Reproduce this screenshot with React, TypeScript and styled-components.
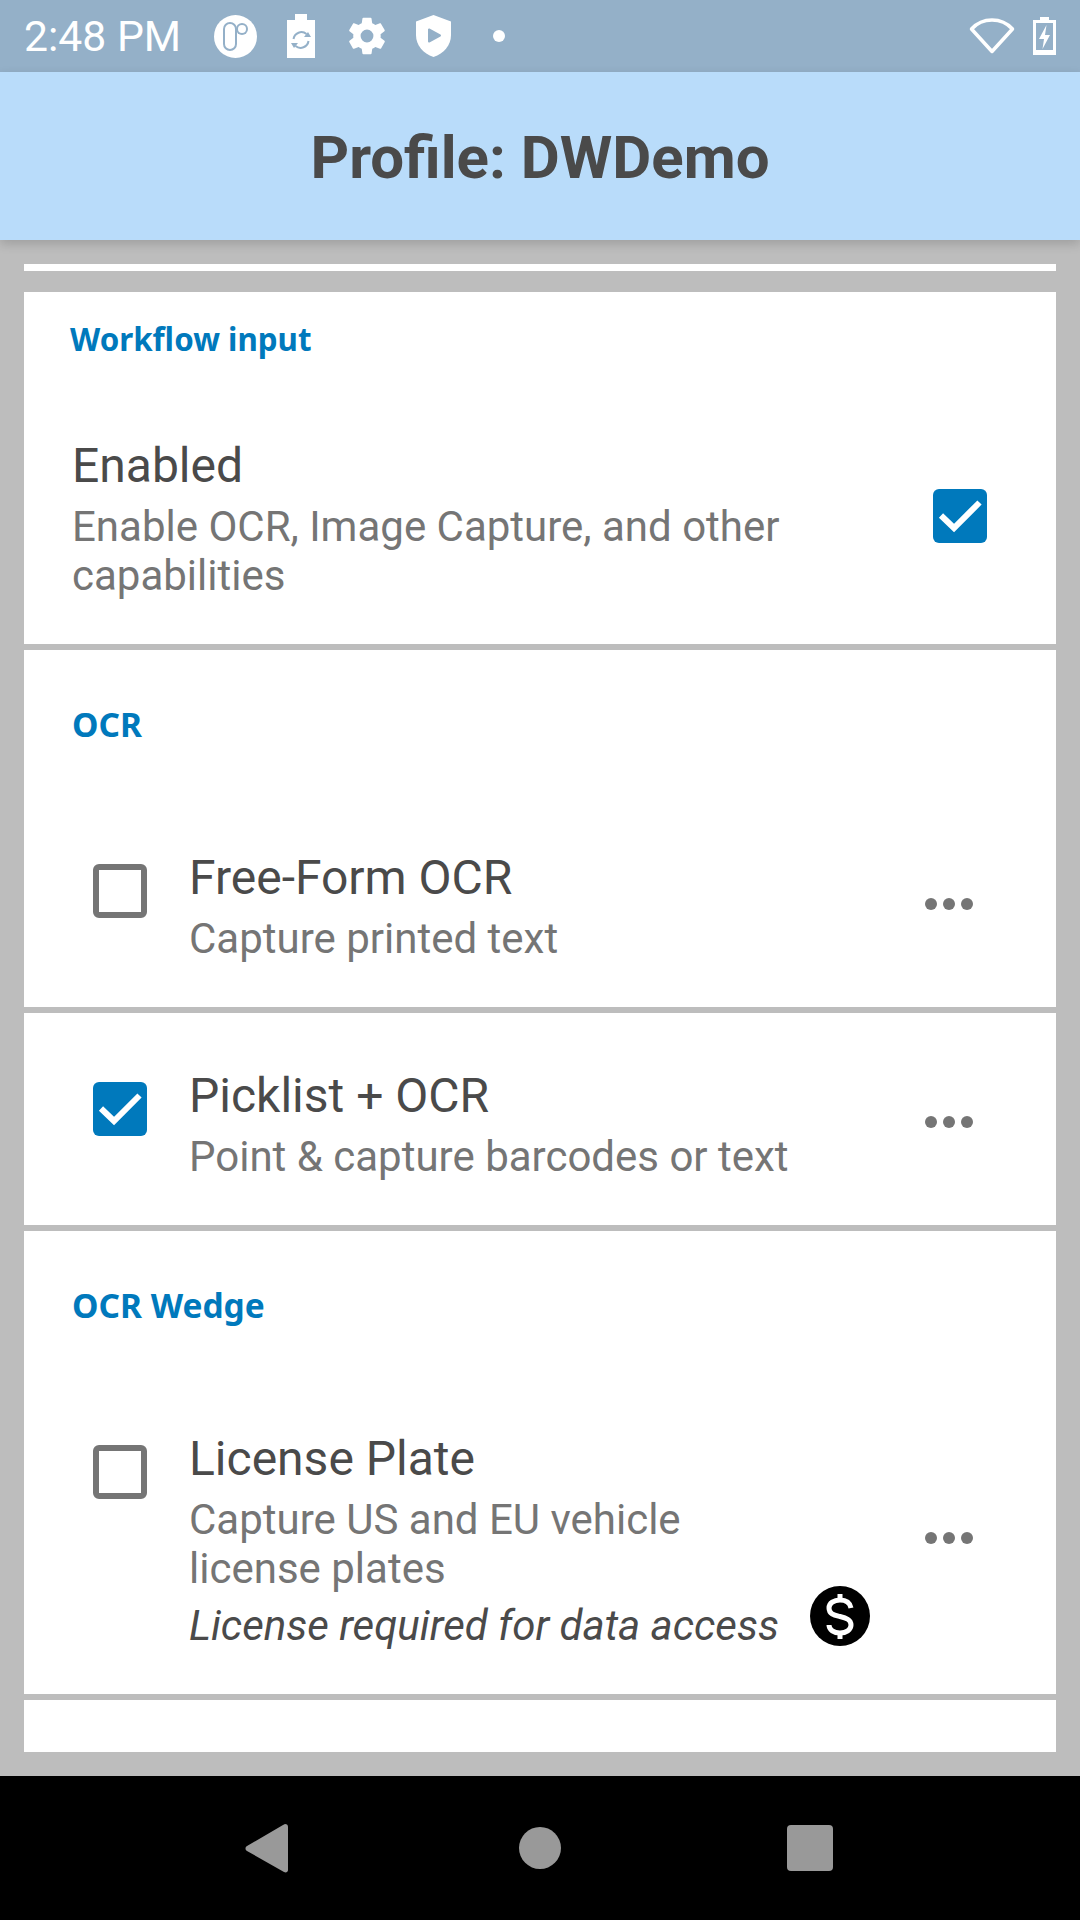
import React from 'react';
import styled, { createGlobalStyle } from 'styled-components';

const GlobalStyle = createGlobalStyle`
  html, body {
    margin: 0;
    padding: 0;
    background: #bdbdbd;
  }
`;

const Screen = styled.div`
  width: 1080px;
  height: 1920px;
  display: flex;
  flex-direction: column;
  overflow: hidden;
  font-family: Roboto, "Liberation Sans", sans-serif;
  background: #bdbdbd;
`;

const StatusBar = styled.div`
  height: 72px;
  flex: none;
  display: flex;
  align-items: center;
  padding: 0 24px;
  background: #94b0c8;
  color: #fff;
`;

const Clock = styled.span`
  font-size: 42.7px;
  width: 190px;
`;

const StatusIcons = styled.div`
  display: flex;
  align-items: center;
  gap: 30px;
  flex: 1;
`;

const AppBar = styled.header`
  height: 168px;
  flex: none;
  display: flex;
  align-items: center;
  justify-content: center;
  padding-top: 2px;
  box-sizing: border-box;
  background: #b9dcfa;
  box-shadow: 0 4px 10px rgba(0, 0, 0, 0.16);
  position: relative;
  z-index: 1;
`;

const Title = styled.h1`
  margin: 0;
  font-size: 60px;
  font-weight: 700;
  color: #4a4a4a;
`;

const Content = styled.main`
  flex: 1;
  display: flex;
  flex-direction: column;
  gap: 6px;
  padding: 24px;
  overflow: hidden;
`;

const Strip = styled.div`
  height: 7px;
  flex: none;
  background: #fff;
  margin-bottom: 15px;
`;

const Card = styled.section<{ $height: number }>`
  height: ${p => p.$height}px;
  flex: none;
  background: #fff;
  position: relative;
  overflow: hidden;
`;

const SectionLabel = styled.div<{ $left: number; $top: number; $size?: number }>`
  padding: ${p => p.$top}px 0 0 ${p => p.$left}px;
  font-family: "Noto Sans", "Open Sans", sans-serif;
  font-size: ${p => p.$size ?? 33.5}px;
  line-height: 46px;
  font-weight: 700;
  color: #0079bc;
`;

const Row = styled.div<{ $top: number }>`
  display: flex;
  align-items: flex-start;
  padding-top: ${p => p.$top}px;
`;

const BoxSlot = styled.div<{ $top: number }>`
  width: 165px;
  flex: none;
  padding: ${p => p.$top}px 0 0 69px;
  box-sizing: border-box;
`;

const Body = styled.div<{ $left?: number }>`
  flex: 1;
  padding-left: ${p => p.$left ?? 0}px;
  min-width: 0;
`;

const ItemTitle = styled.div`
  font-size: 48px;
  line-height: 58px;
  margin-bottom: 7px;
  color: #4a4a4a;
`;

const ItemText = styled.div<{ $width: number }>`
  width: ${p => p.$width}px;
  font-size: 42px;
  line-height: 49px;
  color: #757575;
`;

const LicenseLine = styled.div`
  display: flex;
  align-items: flex-start;
  margin-top: 8px;
  height: 49px;
  font-size: 42px;
  line-height: 49px;
  font-style: italic;
  white-space: nowrap;
  color: #4a4a4a;
`;

const DollarSlot = styled.div`
  margin: -15px 0 0 31px;
  height: 60px;
`;

const MoreSlot = styled.div<{ $top: number }>`
  width: 131px;
  flex: none;
  padding-top: ${p => p.$top}px;
`;

const EnabledBox = styled.div`
  width: 123px;
  flex: none;
  padding-top: 52px;
`;

const Box = styled.div<{ $checked?: boolean }>`
  width: 54px;
  height: 54px;
  box-sizing: border-box;
  border-radius: 6px;
  display: flex;
  align-items: center;
  justify-content: center;
  background: ${p => (p.$checked ? '#0079bc' : '#fff')};
  border: ${p => (p.$checked ? 'none' : '6px solid #757575')};
`;

const NavBar = styled.nav`
  height: 144px;
  flex: none;
  background: #000;
  display: flex;
  align-items: center;
  justify-content: center;
  gap: 226px;
`;

const Glyph = styled.svg<{ $left?: number; $right?: number }>`
  display: block;
  flex: none;
  margin-left: ${p => p.$left ?? 0}px;
  margin-right: ${p => p.$right ?? 0}px;
`;

const NavIcon = styled(Glyph)`
  fill: #999;
`;

const SmallDot = styled.span`
  width: 12px;
  height: 12px;
  border-radius: 50%;
  background: #fff;
  margin-left: 12px;
`;

const Check = () => (
  <svg width="54" height="54" viewBox="0 0 54 54">
    <path d="M8 26.5 L21 39 L46.5 13.5" fill="none" stroke="#fff" strokeWidth="6" />
  </svg>
);

const Checkbox = ({ checked }: { checked?: boolean }) => (
  <Box $checked={checked}>{checked && <Check />}</Box>
);

const Dots = () => (
  <Glyph width="48" height="12" viewBox="0 0 48 12">
    <circle cx="6" cy="6" r="6" fill="#757575" />
    <circle cx="24" cy="6" r="6" fill="#757575" />
    <circle cx="42" cy="6" r="6" fill="#757575" />
  </Glyph>
);

const Dollar = () => (
  <Glyph width="60" height="60" viewBox="0 0 60 60">
    <circle cx="30" cy="30" r="30" fill="#000" />
    <path
      d="M41 22c-1-5-5-8-11-8s-11 3-11 8c0 6 5 7 11 8.5s11 3 11 8.500c0 5-5 8-11 8s-11-3-11-8"
      fill="none"
      stroke="#fff"
      strokeWidth="5"
    />
    <path d="M30 8v7M30 46v7" stroke="#fff" strokeWidth="5" />
  </Glyph>
);

const LogoIcon = () => (
  <Glyph width="43" height="43" viewBox="0 0 43 43">
    <circle cx="21.500" cy="21.500" r="21.500" fill="#fff" />
    <rect x="10" y="8" width="12" height="27" rx="6" fill="none" stroke="#94b0c8" strokeWidth="2" />
    <circle cx="28" cy="14" r="6" fill="#94b0c8" />
    <circle cx="28" cy="14" r="4" fill="#fff" />
  </Glyph>
);

const BatterySyncIcon = () => (
  <Glyph width="28" height="44" viewBox="0 0 28 44">
    <path d="M8 0h12v6h8v38H0V6h8z" fill="#fff" />
    <path d="M6.500 25a8 8 0 0 1 13-5M21.500 27a8 8 0 0 1-13 5" fill="none" stroke="#94b0c8" strokeWidth="2" />
    <path d="M17 23h7l-3-5zM11 29H4l3 5z" fill="#94b0c8" />
  </Glyph>
);

const GearIcon = () => (
  <Glyph width="44" height="44" viewBox="0 0 24 24">
    <path
      fill="#fff"
      fillRule="evenodd"
      d="M19.400 13c.04-.32.07-.66.07-1s-.03-.68-.07-1l2.110-1.650c.19-.15.24-.42.12-.64l-2-3.460c-.12-.22-.39-.3-.61-.22l-2.490 1c-.52-.4-1.080-.73-1.690-.98l-.38-2.650A.49.49 0 0 0 14 2h-4c-.25 0-.46.18-.49.42l-.38 2.650c-.61.25-1.170.59-1.690.98l-2.490-1c-.23-.09-.49 0-.61.22l-2 3.460c-.13.22-.07.49.12.64L4.570 11c-.04.32-.07.66-.07 1s.03.68.07 1l-2.110 1.650c-.19.15-.24.42-.12.64l2 3.460c.12.22.39.3.61.22l2.490-1c.52.4 1.080.73 1.690.98l.38 2.650c.03.24.24.42.49.42h4c.25 0 .46-.18.49-.42l.38-2.650c.61-.25 1.170-.59 1.690-.98l2.490 1c.23.09.49 0 .61-.22l2-3.460c.12-.22.07-.49-.12-.64zM12 15.500a3.500 3.500 0 1 1 0-7 3.500 3.500 0 0 1 0 7z"
    />
  </Glyph>
);

const ShieldIcon = () => (
  <Glyph width="35" height="42" viewBox="0 0 35 42" $left={-3}>
    <path d="M17.500 0 35 6.500V20c0 10-7 18.500-17.500 22C7 38.500 0 30 0 20V6.500z" fill="#fff" />
    <path d="M13 14.500v12l11-6z" fill="#94b0c8" stroke="#94b0c8" strokeWidth="2" strokeLinejoin="round" />
  </Glyph>
);

const WifiIcon = () => (
  <Glyph width="46" height="38" viewBox="0 0 46 38" $right={18}>
    <path d="M23 34.500 2.500 12C8 6 15 3 23 3s15 3 20.500 9z" fill="none" stroke="#fff" strokeWidth="3.500" strokeLinejoin="round" />
  </Glyph>
);

const BatteryIcon = () => (
  <Glyph width="23" height="38" viewBox="0 0 23 38">
    <path d="M7 0h9v3h7v35H0V3h7z" fill="#fff" />
    <path d="M3 6h17v27H3z" fill="#94b0c8" />
    <path d="M13.500 8 6 22h5l-1.500 10L17 18h-5z" fill="#fff" />
  </Glyph>
);

export default function App() {
  return (
    <Screen>
      <GlobalStyle />
      <StatusBar>
        <Clock>2:48 PM</Clock>
        <StatusIcons>
          <LogoIcon />
          <BatterySyncIcon />
          <GearIcon />
          <ShieldIcon />
          <SmallDot />
        </StatusIcons>
        <WifiIcon />
        <BatteryIcon />
      </StatusBar>
      <AppBar>
        <Title>Profile: DWDemo</Title>
      </AppBar>
      <Content>
        <Strip />
        <Card $height={352}>
          <SectionLabel $left={46} $top={24} $size={31.3}>Workflow input</SectionLabel>
          <Row $top={75}>
            <Body $left={48}>
              <ItemTitle>Enabled</ItemTitle>
              <ItemText $width={760}>Enable OCR, Image Capture, and other capabilities</ItemText>
            </Body>
            <EnabledBox>
              <Checkbox checked />
            </EnabledBox>
          </Row>
        </Card>
        <Card $height={357}>
          <SectionLabel $left={48} $top={51}>OCR</SectionLabel>
          <Row $top={102}>
            <BoxSlot $top={15}>
              <Checkbox />
            </BoxSlot>
            <Body>
              <ItemTitle>Free-Form OCR</ItemTitle>
              <ItemText $width={640}>Capture printed text</ItemText>
            </Body>
            <MoreSlot $top={49}>
              <Dots />
            </MoreSlot>
          </Row>
        </Card>
        <Card $height={212}>
          <Row $top={54}>
            <BoxSlot $top={15}>
              <Checkbox checked />
            </BoxSlot>
            <Body>
              <ItemTitle>Picklist + OCR</ItemTitle>
              <ItemText $width={640}>Point &amp; capture barcodes or text</ItemText>
            </Body>
            <MoreSlot $top={49}>
              <Dots />
            </MoreSlot>
          </Row>
        </Card>
        <Card $height={463}>
          <SectionLabel $left={48} $top={51}>OCR Wedge</SectionLabel>
          <Row $top={102}>
            <BoxSlot $top={15}>
              <Checkbox />
            </BoxSlot>
            <Body>
              <ItemTitle>License Plate</ItemTitle>
              <ItemText $width={540}>Capture US and EU vehicle license plates</ItemText>
              <LicenseLine>
                License required for data access
                <DollarSlot>
                  <Dollar />
                </DollarSlot>
              </LicenseLine>
            </Body>
            <MoreSlot $top={102}>
              <Dots />
            </MoreSlot>
          </Row>
        </Card>
        <Card $height={52} />
      </Content>
      <NavBar>
        <NavIcon width="43" height="49" viewBox="0 0 43 49" $right={5}>
          <path d="M40 0c2 0 3 1 3 3v43c0 2-2 3-4 2L2 27c-2-1-2-4 0-5L38 1z" />
        </NavIcon>
        <NavIcon width="42" height="42" viewBox="0 0 42 42">
          <circle cx="21" cy="21" r="21" />
        </NavIcon>
        <NavIcon width="46" height="46" viewBox="0 0 46 46" $right={2}>
          <rect width="46" height="46" rx="4" />
        </NavIcon>
      </NavBar>
    </Screen>
  );
}
